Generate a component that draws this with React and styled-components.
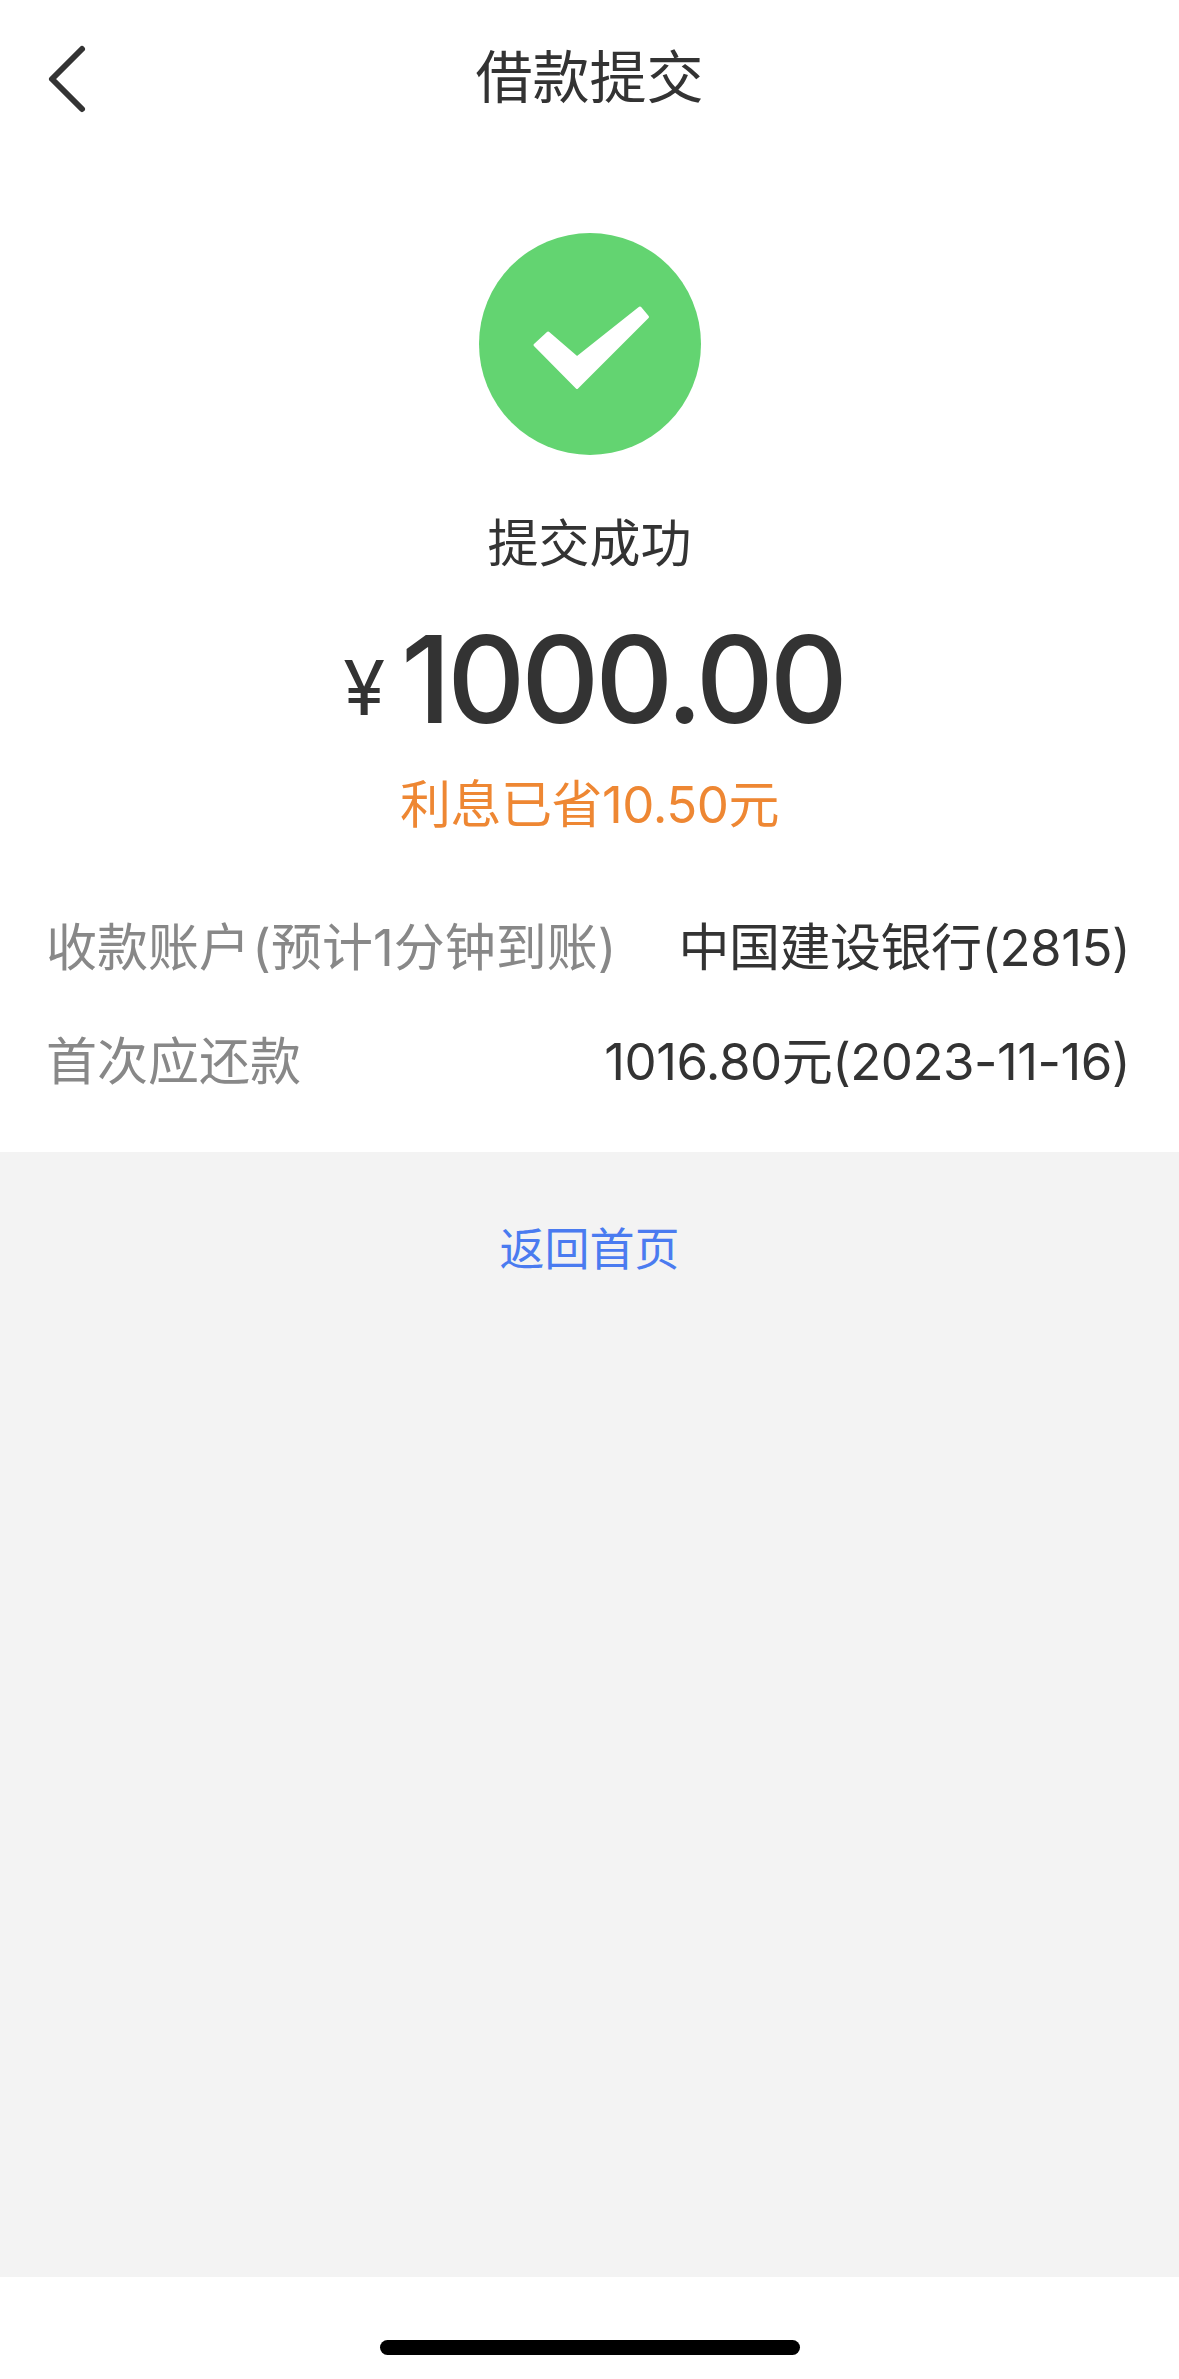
import React from "react";
import styled, { createGlobalStyle } from "styled-components";

const GlobalStyle = createGlobalStyle`
  html, body {
    margin: 0;
    padding: 0;
    background: #fff;
  }
  * {
    box-sizing: border-box;
  }
`;

const Page = styled.div`
  width: 1179px;
  height: 2379px;
  display: flex;
  flex-direction: column;
  font-family: "Inter", "Noto Sans CJK SC", sans-serif;
  color: #333;
`;

const Header = styled.header`
  position: relative;
  height: 154px;
  display: flex;
  justify-content: center;
  padding-top: 41px;
`;

const BackButton = styled.button`
  position: absolute;
  left: 46px;
  top: 44px;
  width: 42px;
  height: 70px;
  padding: 0;
  border: 0;
  background: none;
  svg {
    display: block;
  }
`;

const Title = styled.h1`
  margin: 0;
  font-size: 57px;
  line-height: 74px;
  font-weight: 400;
`;

const Result = styled.section`
  height: 998px;
  display: flex;
  flex-direction: column;
  align-items: center;
  padding-top: 79px;
`;

const StatusCircle = styled.div`
  width: 222px;
  height: 222px;
  border-radius: 50%;
  background: #63d471;
  display: flex;
  align-items: center;
  justify-content: center;
`;

const StatusText = styled.div`
  margin-top: 56px;
  font-size: 51px;
  line-height: 66px;
`;

const Amount = styled.div`
  margin-top: 37px;
  padding-left: 8px;
  display: flex;
  align-items: baseline;
  gap: 16px;
  line-height: 130px;
`;

const Currency = styled.span`
  font-size: 76px;
  position: relative;
  top: -8px;
`;

const Digits = styled.span`
  font-size: 121px;
  font-weight: 550;
  letter-spacing: -4px;
`;

const Saved = styled.div`
  margin-top: 12px;
  font-size: 51px;
  line-height: 66px;
  letter-spacing: -0.5px;
  color: #ee8733;
`;

const Details = styled.div`
  align-self: stretch;
  margin-top: 77px;
  padding: 0 49px 0 46px;
  display: flex;
  flex-direction: column;
  gap: 48px;
`;

const Row = styled.div`
  display: flex;
  justify-content: space-between;
  font-size: 51px;
  line-height: 66px;
`;

const Label = styled.span`
  color: #888;
  word-spacing: -12px;
`;

const Value = styled.span`
  color: #333;
  letter-spacing: -0.5px;
`;

const Footer = styled.div`
  flex: 1;
  background: #f3f3f3;
  display: flex;
  justify-content: center;
  padding-top: 68px;
`;

const HomeLink = styled.a`
  font-size: 45px;
  line-height: 60px;
  color: #4a7bf0;
`;

const HomeArea = styled.div`
  height: 102px;
  display: flex;
  justify-content: center;
  padding-top: 63px;
`;

const HomeBar = styled.div`
  width: 420px;
  height: 15px;
  border-radius: 8px;
  background: #000;
`;

const rows = [
  { label: "收款账户 (预计1分钟到账)", value: "中国建设银行(2815)" },
  { label: "首次应还款", value: "1016.80元(2023-11-16)" },
];

export default function App() {
  return (
    <Page>
      <GlobalStyle />
      <Header>
        <BackButton aria-label="返回">
          <svg width="42" height="70" viewBox="0 0 42 70" fill="none">
            <path
              d="M36 5 L6 35 L36 65"
              stroke="#333"
              strokeWidth="6"
              strokeLinecap="round"
              strokeLinejoin="round"
            />
          </svg>
        </BackButton>
        <Title>借款提交</Title>
      </Header>
      <Result>
        <StatusCircle>
          <svg width="122" height="96" viewBox="0 0 122 96">
            <path
              d="M6 49 L19 37 L48 62 L111 12 L118.5 21 L48 91.5 Z"
              fill="#fff"
              stroke="#fff"
              strokeWidth="3"
              strokeLinejoin="round"
            />
          </svg>
        </StatusCircle>
        <StatusText>提交成功</StatusText>
        <Amount>
          <Currency>¥</Currency>
          <Digits>1000.00</Digits>
        </Amount>
        <Saved>利息已省10.50元</Saved>
        <Details>
          {rows.map((row) => (
            <Row key={row.label}>
              <Label>{row.label}</Label>
              <Value>{row.value}</Value>
            </Row>
          ))}
        </Details>
      </Result>
      <Footer>
        <HomeLink>返回首页</HomeLink>
      </Footer>
      <HomeArea>
        <HomeBar />
      </HomeArea>
    </Page>
  );
}
